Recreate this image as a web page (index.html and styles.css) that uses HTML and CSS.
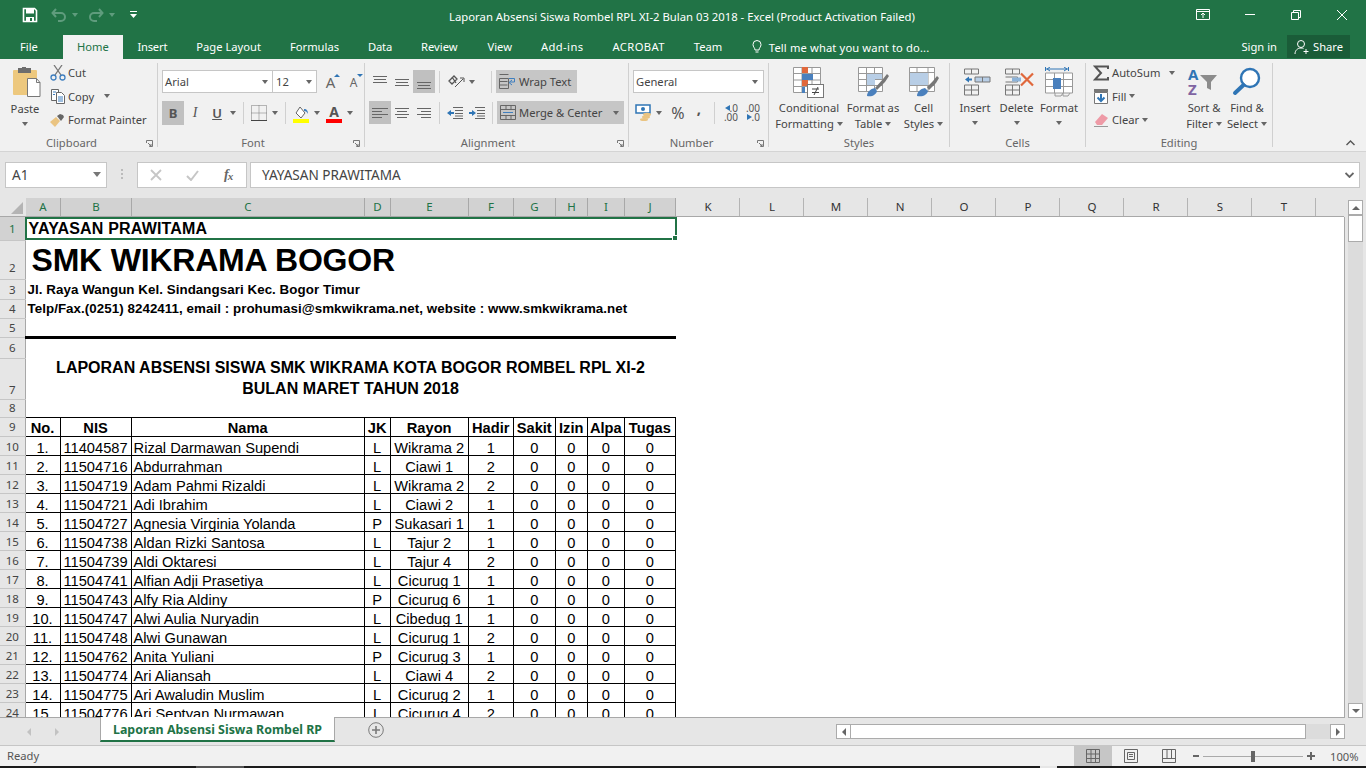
FILE: index.html
```html
<!DOCTYPE html>
<html>
<head>
  <title>Laporan Absensi Siswa Rombel RPL XI-2 Bulan 03 2018 - Excel</title>
  <link rel="stylesheet" href="styles.css">
</head>
<body>
<div class="app">

  <!-- title bar -->
  <header class="titlebar">
    <div class="quick">
      <svg class="save" width="16" height="16" viewBox="0 0 16 16"><path d="M1.5 1.5h11l2 2v11h-13z" fill="none" stroke="#fff" stroke-width="1.6"/><rect x="4" y="2" width="8" height="4.5" fill="#fff"/><rect x="4" y="10" width="8" height="4" fill="#fff"/><rect x="8" y="11" width="2" height="3" fill="#217346"/></svg>
      <svg class="undo" width="16" height="14" viewBox="0 0 16 14"><path d="M5 1L1.5 5 5 9M2 5h8a4 4 0 0 1 0 8H7" fill="none" stroke="#5f9c7d" stroke-width="2"/></svg>
      <span class="caret dim"></span>
      <svg class="redo" width="16" height="14" viewBox="0 0 16 14"><path d="M11 1l3.5 4L11 9M14 5H6a4 4 0 0 0 0 8h3" fill="none" stroke="#5f9c7d" stroke-width="2"/></svg>
      <span class="caret dim"></span>
      <svg class="custom" width="7" height="8" viewBox="0 0 7 8"><rect y="0" width="7" height="1" fill="#fff"/><path d="M0 3h7L3.5 7z" fill="#fff"/></svg>
    </div>
    <div class="doc-title">Laporan Absensi Siswa Rombel RPL XI-2 Bulan 03 2018 - Excel (Product Activation Failed)</div>
    <div class="winbtns">
      <svg width="14" height="11" viewBox="0 0 14 11"><path d="M.5.5h13v10H.5zM.5 2.500h13M7 9V4.500M5 6l2-2 2 2" fill="none" stroke="#fff"/></svg>
      <svg width="10" height="2" viewBox="0 0 10 2"><rect y="0" width="10" height="1" fill="#fff"/></svg>
      <svg width="10" height="10" viewBox="0 0 10 10"><path d="M.5 2.500h7v7h-7zM2.500 2.500v-2h7v7h-2" fill="none" stroke="#fff"/></svg>
      <svg width="10" height="10" viewBox="0 0 10 10"><path d="M0 0l10 10M10 0L0 10" stroke="#fff" fill="none"/></svg>
    </div>
  </header>

  <!-- ribbon tabs -->
  <nav class="tabs">
    <span class="tab file">File</span>
    <span class="tab home">Home</span>
    <span class="tab tight">Insert</span>
    <span class="tab">Page Layout</span>
    <span class="tab">Formulas</span>
    <span class="tab tight">Data</span>
    <span class="tab">Review</span>
    <span class="tab view">View</span>
    <span class="tab loose">Add-ins</span>
    <span class="tab loose">ACROBAT</span>
    <span class="tab">Team</span>
    <span class="tellme">
      <svg width="10" height="14" viewBox="0 0 10 14"><path d="M3 10c0-2-2-3-2-5.500a4 4 0 0 1 8 0C9 7 7 8 7 10zM3.500 12h3" fill="none" stroke="#fff"/></svg>
      Tell me what you want to do...
    </span>
    <span class="signin">Sign in</span>
    <span class="share">
      <svg width="16" height="16" viewBox="0 0 16 16"><circle cx="7" cy="5" r="3.500" fill="none" stroke="#fff"/><path d="M1 15c0-3.500 2.500-6 6-6 1 0 2 .2 2.500.6M12 10v5M9.500 12.500h5" fill="none" stroke="#fff"/></svg>
      Share
    </span>
  </nav>

  <!-- ribbon -->
  <section class="ribbon">

    <div class="group g-clipboard">
      <div class="group-body">
        <div class="big paste">
          <svg width="30" height="31" viewBox="0 0 30 31"><rect x="1" y="3" width="24" height="25" rx="1" fill="#edc87e"/><rect x="6" y="1" width="13" height="5" fill="#6d6d6d"/><rect x="10" y="0" width="4" height="2" fill="#6d6d6d"/><path d="M15.500 11.500h9l3.500 4v14h-12.500z" fill="#fff" stroke="#777"/><path d="M24.500 11.500v4h3.500" fill="none" stroke="#777"/></svg>
          <span class="big-label">Paste</span>
          <span class="caret"></span>
        </div>
        <div class="stack">
          <div class="line">
            <svg width="16" height="16" viewBox="0 0 16 16"><path d="M4 0l7 10M12 0L5 10" stroke="#777" stroke-width="1.300" fill="none"/><circle cx="3.500" cy="12.500" r="2.500" fill="none" stroke="#3f7fbf" stroke-width="1.300"/><circle cx="12.500" cy="12.500" r="2.500" fill="none" stroke="#3f7fbf" stroke-width="1.300"/></svg>
            Cut
          </div>
          <div class="line">
            <svg width="16" height="16" viewBox="0 0 16 16"><path d="M1.500 1.500h7v11h-7z" fill="#fff" stroke="#666"/><path d="M6.500 4.500h5l3 3v8h-8z" fill="#fff" stroke="#666"/><path d="M3 4h3M3 6.500h2M8 9h5M8 11h5M8 13h5" stroke="#3f7fbf"/></svg>
            Copy <span class="caret after-copy"></span>
          </div>
          <div class="line">
            <svg width="16" height="14" viewBox="0 0 16 14"><path d="M0 9l6-5 4 4-5 6z" fill="#eac482"/><path d="M7 3l3-2 3 1 1 2-3 4z" fill="#666"/></svg>
            Format Painter
          </div>
        </div>
      </div>
      <div class="group-label">Clipboard</div>
      <svg class="launcher" width="7" height="7" viewBox="0 0 7 7"><path d="M.5 3V.5H6.500V6.500H3.500M2 3l3 3M5 4v2H3" fill="none" stroke="#777"/></svg>
    </div>

    <div class="group g-font">
      <div class="group-body rows">
        <div class="row">
          <div class="combo font-name">Arial<span class="caret"></span></div>
          <div class="combo font-size">12<span class="caret"></span></div>
          <span class="font-step grow">A<i class="tri up"></i></span>
          <span class="font-step shrink">A<i class="tri down"></i></span>
        </div>
        <div class="row">
          <span class="btn active bold">B</span>
          <span class="btn ital">I</span>
          <span class="btn under">U</span>
          <span class="caret side"></span>
          <span class="sep"></span>
          <svg class="ico" width="16" height="16" viewBox="0 0 16 16"><path d="M.5.5h15v15H.5zM8 .5v15M.5 8h15" fill="none" stroke="#777" stroke-dasharray="1 1"/><path d="M0 15.500h16" stroke="#444"/></svg>
          <span class="caret side"></span>
          <span class="sep"></span>
          <span class="color-ico">
            <svg width="16" height="13" viewBox="0 0 16 13"><path d="M3 7l4-6 5 6-4 5z" fill="#fff" stroke="#666"/><path d="M11 3c3 0 4 2 4 5-1-2-2-3-4-3z" fill="#3f7fbf"/></svg>
            <i class="bar yellow"></i>
          </span>
          <span class="caret side"></span>
          <span class="color-ico text-a">
            <b>A</b>
            <i class="bar red"></i>
          </span>
          <span class="caret side"></span>
        </div>
      </div>
      <div class="group-label">Font</div>
      <svg class="launcher" width="7" height="7" viewBox="0 0 7 7"><path d="M.5 3V.5H6.500V6.500H3.500M2 3l3 3M5 4v2H3" fill="none" stroke="#777"/></svg>
    </div>

    <div class="group g-align">
      <div class="group-body rows">
        <div class="row">
          <span class="btn al"><svg width="14" height="14" viewBox="0 0 14 14"><path d="M0 1.500h14M1 4.500h12M0 7.500h14" stroke="#666" fill="none"/></svg></span>
          <span class="btn al"><svg width="14" height="14" viewBox="0 0 14 14"><path d="M0 4.500h14M1 7.500h12M0 10.500h14" stroke="#666" fill="none"/></svg></span>
          <span class="btn al active"><svg width="14" height="14" viewBox="0 0 14 14"><path d="M0 7.500h14M1 10.500h12M0 13.500h14" stroke="#666" fill="none"/></svg></span>
          <span class="sep"></span>
          <svg class="ico orient" width="17" height="15" viewBox="0 0 17 15"><path d="M1 7l5-5 3 3-5 5zM4 3l4 6" fill="none" stroke="#555" stroke-width="1.300"/><path d="M7 13L15 5M12 4h4v4" fill="none" stroke="#555"/></svg>
          <span class="caret side"></span>
          <span class="sep tall first"></span>
          <span class="wide-btn active wrap">
            <svg width="17" height="15" viewBox="0 0 17 15"><path d="M.5.5h9M.5 4.500h9v10h-9zM.5 7.500h8M.5 11h8" fill="none" stroke="#666"/><path d="M10 4.500h5.500V8H11" fill="none" stroke="#3f7fbf"/><path d="M13 6L10 8.500 13 11" fill="none" stroke="#3f7fbf"/></svg>
            Wrap Text
          </span>
        </div>
        <div class="row">
          <span class="btn al active"><svg width="16" height="14" viewBox="0 0 16 14"><path d="M0 2.500h16M0 5.500h10M0 8.500h16M0 11.500h10" stroke="#666" fill="none"/></svg></span>
          <span class="btn al"><svg width="14" height="14" viewBox="0 0 14 14"><path d="M0 2.500h14M2 5.500h10M0 8.500h14M2 11.500h10" stroke="#666" fill="none"/></svg></span>
          <span class="btn al"><svg width="14" height="14" viewBox="0 0 14 14"><path d="M0 2.500h14M4 5.500h10M0 8.500h14M4 11.500h10" stroke="#666" fill="none"/></svg></span>
          <span class="sep"></span>
          <svg class="ico outdent" width="16" height="12" viewBox="0 0 16 12"><path d="M6 .5h10M8 3.500h8M8 6.500h8M8 9h8M6 11.500h10" stroke="#666" fill="none"/><path d="M0 6l4-3v2h3v2H4v2z" fill="#2f75b5"/></svg>
          <svg class="ico indent" width="16" height="12" viewBox="0 0 16 12"><path d="M6 .5h10M8 3.500h8M8 6.500h8M8 9h8M6 11.500h10" stroke="#666" fill="none"/><path d="M7 6L3 3v2H0v2h3v2z" fill="#2f75b5"/></svg>
          <span class="sep tall"></span>
          <span class="wide-btn active merge">
            <svg width="16" height="15" viewBox="0 0 16 15"><path d="M.5.5h15v14H.5zM.5 4.500h15M.5 10.500h15M6 .5v4M11 .5v4M6 10.500v4M11 10.500v4" fill="none" stroke="#666"/><path d="M3 7.500h10" stroke="#3f7fbf"/></svg>
            Merge &amp; Center
            <span class="caret"></span>
          </span>
        </div>
      </div>
      <div class="group-label">Alignment</div>
      <svg class="launcher" width="7" height="7" viewBox="0 0 7 7"><path d="M.5 3V.5H6.500V6.500H3.500M2 3l3 3M5 4v2H3" fill="none" stroke="#777"/></svg>
    </div>

    <div class="group g-number">
      <div class="group-body rows">
        <div class="row">
          <div class="combo num-format">General<span class="caret"></span></div>
        </div>
        <div class="row">
          <svg class="ico money" width="17" height="17" viewBox="0 0 17 17"><rect x="1" y="1" width="14" height="8" fill="#fff" stroke="#2f75b5" stroke-width="1.500"/><circle cx="8" cy="5" r="2" fill="#2f75b5"/><ellipse cx="12" cy="10.500" rx="4" ry="1.800" fill="#eac482"/><ellipse cx="11" cy="13" rx="4" ry="1.800" fill="#eac482"/><ellipse cx="9" cy="15.500" rx="4" ry="1.500" fill="#eac482"/></svg>
          <span class="caret side"></span>
          <span class="pct">%</span>
          <span class="comma">,</span>
          <span class="sep num-sep"></span>
          <span class="dec"><span class="dec-top"><i class="tri-left"></i>.0</span><span>.00</span></span>
          <span class="dec"><span>.00</span><span class="dec-top"><i class="tri-right"></i>.0</span></span>
        </div>
      </div>
      <div class="group-label">Number</div>
      <svg class="launcher" width="7" height="7" viewBox="0 0 7 7"><path d="M.5 3V.5H6.500V6.500H3.500M2 3l3 3M5 4v2H3" fill="none" stroke="#777"/></svg>
    </div>

    <div class="group g-styles">
      <div class="group-body bigs">
        <div class="big cond">
          <svg width="32" height="31" viewBox="0 0 32 31"><path d="M.5.500h27v25H.5zM.5 6.500h27M.5 13h27M.5 19.500h27M9 .5v25M19 .5v25" fill="#fff" stroke="#999"/><rect x="9" y="0" width="6" height="6" fill="#e0683c"/><rect x="9" y="7" width="11" height="6" fill="#4a80bd"/><rect x="9" y="13" width="6" height="6" fill="#e0683c"/><rect x="9" y="20" width="3" height="6" fill="#4a80bd"/><rect x="14.500" y="17.500" width="16" height="13" fill="#fff" stroke="#777"/><path d="M19 22h7M19 25.500h7M25 20l-4 8" stroke="#444" fill="none"/></svg>
          <span class="big-label">Conditional<br>Formatting<span class="caret"></span></span>
        </div>
        <div class="big fmt-table">
          <svg width="31" height="31" viewBox="0 0 31 31"><path d="M.5.500h24v24H.5zM.5 6.500h24M.5 12.500h24M.5 18.500h24M8.500.5v24M16.500.5v24" fill="#fff" stroke="#999"/><path d="M9 7h15v5H17v6H9z" fill="#b8cee6"/><path d="M17 21l8-9 4-5 2 2-4 6-8 8z" fill="#777"/><path d="M9 29c0-4 3-7 8-8l2 3c-1 4-5 6-10 5z" fill="#4a80bd"/></svg>
          <span class="big-label">Format as<br>Table<span class="caret"></span></span>
        </div>
        <div class="big cell-styles">
          <svg width="30" height="31" viewBox="0 0 30 31"><path d="M.5.500h25v24H.5zM.5 5.500h25M.5 18.500h25M8 .5v24M19 .5v24" fill="#fff" stroke="#999"/><rect x="1" y="6" width="18" height="12" fill="#b8cee6"/><path d="M18 20l6-6 4-5 2 2-3 5-7 7z" fill="#777"/><path d="M8 29c0-4 3-7 8-8l3 3c-1 4-5 6-11 5z" fill="#4a80bd"/></svg>
          <span class="big-label">Cell<br>Styles<span class="caret"></span></span>
        </div>
      </div>
      <div class="group-label">Styles</div>
    </div>

    <div class="group g-cells">
      <div class="group-body bigs">
        <div class="big ins">
          <svg width="28" height="28" viewBox="0 0 28 28"><path d="M.5.500h14v5H.5zM7.500.5v5M.5 16.500h14v10H.5zM.5 21.500h14M7.500 16.500v10" fill="none" stroke="#777"/><path d="M11 8.500h15v5H11zM18.500 8.500v5" fill="#b8cee6" stroke="#777"/><path d="M1 11l4-3v2h3v2H5v2z" fill="#2f75b5"/></svg>
          <span class="big-label">Insert</span>
          <span class="caret"></span>
        </div>
        <div class="big del">
          <svg width="30" height="28" viewBox="0 0 30 28"><path d="M.5.500h14v5H.5zM7.500.5v5M.5 16.500h14v10H.5zM.5 21.500h14M7.500 16.500v10M.5 8.500h12v5H.5" fill="none" stroke="#777"/><rect x="7" y="9" width="9" height="4" fill="#8db3d9"/><path d="M16 5l12 12M28 5L16 17" stroke="#e0683c" stroke-width="2.200" fill="none"/></svg>
          <span class="big-label">Delete</span>
          <span class="caret"></span>
        </div>
        <div class="big fmt">
          <svg width="29" height="31" viewBox="0 0 29 31"><path d="M.5 0v4M23.500 0v4" stroke="#2f75b5" fill="none"/><path d="M1 2h22M5 0L2 2l3 2M19 0l3 2-3 2" stroke="#2f75b5" fill="none"/><path d="M.5 6h27v20H.5zM9.500 6v20M18.500 6v20M.5 12.500h27M.5 19.500h27" fill="#fff" stroke="#999"/><rect x="8" y="11" width="8" height="11" fill="#4a80bd"/><path d="M10 26v3h6l2-3M18 26v3h5l2-3" fill="none" stroke="#999"/></svg>
          <span class="big-label">Format</span>
          <span class="caret"></span>
        </div>
      </div>
      <div class="group-label">Cells</div>
    </div>

    <div class="group g-editing">
      <div class="group-body edit-body">
        <div class="stack">
          <div class="line"><svg width="16" height="16" viewBox="0 0 16 16"><path d="M15 4V1.500H2L8 8l-6 6.500h13V12" fill="none" stroke="#555" stroke-width="2"/></svg><span class="auto-label">AutoSum</span><span class="caret"></span></div>
          <div class="line"><svg width="14" height="15" viewBox="0 0 14 15"><path d="M.5 3.500h13v11H.5z" fill="#fff" stroke="#777"/><rect x="0" y="0" width="14" height="3" fill="#777"/><path d="M7 5v7M3.500 8.500L7 12l3.500-3.500" fill="none" stroke="#2f75b5" stroke-width="2"/></svg><span>Fill</span><span class="caret"></span></div>
          <div class="line"><svg width="14" height="14" viewBox="0 0 14 14"><path d="M1 9l7-8 6 4-6 7H3z" fill="#ee9aa6"/><path d="M0 13.500h14" stroke="#999"/></svg><span>Clear</span><span class="caret"></span></div>
        </div>
        <div class="big sort">
          <span class="sort-ico"><b class="az a">A</b><b class="az z">Z</b><svg width="18" height="15" viewBox="0 0 18 15"><path d="M0 0h17l-6 7v8l-4-2V7z" fill="#8c8c8c"/></svg></span>
          <span class="big-label">Sort &amp;<br>Filter<span class="caret"></span></span>
        </div>
        <div class="big find">
          <svg width="30" height="29" viewBox="0 0 30 29"><circle cx="18" cy="11" r="9" fill="#fff" stroke="#2f75b5" stroke-width="2.400"/><path d="M11.500 18L3 26" stroke="#2f75b5" stroke-width="4" stroke-linecap="round"/></svg>
          <span class="big-label">Find &amp;<br>Select<span class="caret"></span></span>
        </div>
      </div>
      <div class="group-label">Editing</div>
    </div>

    <svg class="collapse" width="9" height="6" viewBox="0 0 9 6"><path d="M.5 5l4-4 4 4" fill="none" stroke="#555" stroke-width="1.400"/></svg>
  </section>

  <!-- formula bar -->
  <section class="formula-bar">
    <div class="name-box">A1<span class="caret big-caret"></span></div>
    <div class="dots"><i></i><i></i><i></i></div>
    <div class="fx-box">
      <svg width="12" height="12" viewBox="0 0 12 12"><path d="M1 1l10 10M11 1L1 11" stroke="#c6c6c6" stroke-width="1.800" fill="none"/></svg>
      <svg width="13" height="11" viewBox="0 0 13 11"><path d="M1 6l4 4 7-9" stroke="#c6c6c6" stroke-width="2" fill="none"/></svg>
      <span class="fx">f<span class="fx-x">x</span></span>
    </div>
    <div class="formula-input">YAYASAN PRAWITAMA
      <svg class="fb-expand" width="9" height="6" viewBox="0 0 9 6"><path d="M.5 1l4 4 4-4" fill="none" stroke="#666" stroke-width="1.800"/></svg>
    </div>
  </section>

  <!-- column letters -->
  <div class="col-heads">
    <div class="corner"><i></i></div>
    <span class="ch on w-a">A</span>
    <span class="ch on w-b">B</span>
    <span class="ch on w-c">C</span>
    <span class="ch on w-d">D</span>
    <span class="ch on w-e">E</span>
    <span class="ch on w-f">F</span>
    <span class="ch on w-g">G</span>
    <span class="ch on w-h">H</span>
    <span class="ch on w-i">I</span>
    <span class="ch on w-j">J</span>
    <span class="ch">K</span>
    <span class="ch">L</span>
    <span class="ch">M</span>
    <span class="ch">N</span>
    <span class="ch">O</span>
    <span class="ch">P</span>
    <span class="ch">Q</span>
    <span class="ch">R</span>
    <span class="ch">S</span>
    <span class="ch">T</span>
    <span class="ch-rest"></span>
  </div>

  <!-- sheet -->
  <div class="sheet-wrap">
    <div class="sheet">
      <table class="grid">
        <colgroup>
          <col class="c-rh"><col class="c-a"><col class="c-b"><col class="c-c"><col class="c-d"><col class="c-e"><col class="c-f"><col class="c-g"><col class="c-h"><col class="c-i"><col class="c-j">
        </colgroup>
        <tr class="r1"><th class="on">1</th><td colspan="10" class="t-yayasan">YAYASAN PRAWITAMA</td></tr>
        <tr class="r2"><th>2</th><td colspan="10" class="t-smk">SMK WIKRAMA BOGOR</td></tr>
        <tr class="r3"><th>3</th><td colspan="10" class="t-addr">Jl. Raya Wangun Kel. Sindangsari Kec. Bogor Timur</td></tr>
        <tr class="r4"><th>4</th><td colspan="10" class="t-addr">Telp/Fax.(0251) 8242411, email : prohumasi@smkwikrama.net, website : www.smkwikrama.net</td></tr>
        <tr class="r5"><th>5</th><td colspan="10" class="t-rule"></td></tr>
        <tr class="r6"><th>6</th><td colspan="10"></td></tr>
        <tr class="r7"><th>7</th><td colspan="10" class="t-title"><div class="title-lines">LAPORAN ABSENSI SISWA SMK WIKRAMA KOTA BOGOR ROMBEL RPL XI-2<br>BULAN MARET TAHUN 2018</div></td></tr>
        <tr class="r8"><th>8</th><td colspan="10"></td></tr>
        <tr class="r9 data head"><th>9</th><td>No.</td><td>NIS</td><td>Nama</td><td>JK</td><td>Rayon</td><td>Hadir</td><td>Sakit</td><td>Izin</td><td>Alpa</td><td>Tugas</td></tr>
        <tr class="data"><th>10</th><td>1.</td><td>11404587</td><td class="nm">Rizal Darmawan Supendi</td><td>L</td><td>Wikrama 2</td><td>1</td><td>0</td><td>0</td><td>0</td><td>0</td></tr>
        <tr class="data"><th>11</th><td>2.</td><td>11504716</td><td class="nm">Abdurrahman</td><td>L</td><td>Ciawi 1</td><td>2</td><td>0</td><td>0</td><td>0</td><td>0</td></tr>
        <tr class="data"><th>12</th><td>3.</td><td>11504719</td><td class="nm">Adam Pahmi Rizaldi</td><td>L</td><td>Wikrama 2</td><td>2</td><td>0</td><td>0</td><td>0</td><td>0</td></tr>
        <tr class="data"><th>13</th><td>4.</td><td>11504721</td><td class="nm">Adi Ibrahim</td><td>L</td><td>Ciawi 2</td><td>1</td><td>0</td><td>0</td><td>0</td><td>0</td></tr>
        <tr class="data"><th>14</th><td>5.</td><td>11504727</td><td class="nm">Agnesia Virginia Yolanda</td><td>P</td><td>Sukasari 1</td><td>1</td><td>0</td><td>0</td><td>0</td><td>0</td></tr>
        <tr class="data"><th>15</th><td>6.</td><td>11504738</td><td class="nm">Aldan Rizki Santosa</td><td>L</td><td>Tajur 2</td><td>1</td><td>0</td><td>0</td><td>0</td><td>0</td></tr>
        <tr class="data"><th>16</th><td>7.</td><td>11504739</td><td class="nm">Aldi Oktaresi</td><td>L</td><td>Tajur 4</td><td>2</td><td>0</td><td>0</td><td>0</td><td>0</td></tr>
        <tr class="data"><th>17</th><td>8.</td><td>11504741</td><td class="nm">Alfian Adji Prasetiya</td><td>L</td><td>Cicurug 1</td><td>1</td><td>0</td><td>0</td><td>0</td><td>0</td></tr>
        <tr class="data"><th>18</th><td>9.</td><td>11504743</td><td class="nm">Alfy Ria Aldiny</td><td>P</td><td>Cicurug 6</td><td>1</td><td>0</td><td>0</td><td>0</td><td>0</td></tr>
        <tr class="data"><th>19</th><td>10.</td><td>11504747</td><td class="nm">Alwi Aulia Nuryadin</td><td>L</td><td>Cibedug 1</td><td>1</td><td>0</td><td>0</td><td>0</td><td>0</td></tr>
        <tr class="data"><th>20</th><td>11.</td><td>11504748</td><td class="nm">Alwi Gunawan</td><td>L</td><td>Cicurug 1</td><td>2</td><td>0</td><td>0</td><td>0</td><td>0</td></tr>
        <tr class="data"><th>21</th><td>12.</td><td>11504762</td><td class="nm">Anita Yuliani</td><td>P</td><td>Cicurug 3</td><td>1</td><td>0</td><td>0</td><td>0</td><td>0</td></tr>
        <tr class="data"><th>22</th><td>13.</td><td>11504774</td><td class="nm">Ari Aliansah</td><td>L</td><td>Ciawi 4</td><td>2</td><td>0</td><td>0</td><td>0</td><td>0</td></tr>
        <tr class="data"><th>23</th><td>14.</td><td>11504775</td><td class="nm">Ari Awaludin Muslim</td><td>L</td><td>Cicurug 2</td><td>1</td><td>0</td><td>0</td><td>0</td><td>0</td></tr>
        <tr class="data"><th>24</th><td>15.</td><td>11504776</td><td class="nm">Ari Septyan Nurmawan</td><td>L</td><td>Cicurug 4</td><td>2</td><td>0</td><td>0</td><td>0</td><td>0</td></tr>
      </table>
      <div class="selection"><i class="handle"></i></div>
    </div>
    <div class="vscroll">
      <span class="sb-btn"><i class="arrow-up"></i></span>
      <span class="sb-thumb"></span>
      <span class="sb-track"></span>
      <span class="sb-btn"><i class="arrow-down"></i></span>
    </div>
  </div>

  <!-- sheet tabs -->
  <div class="tabbar">
    <div class="tab-nav"><i class="nav-l"></i><i class="nav-r"></i></div>
    <div class="sheet-tab">Laporan Absensi Siswa Rombel RP</div>
    <div class="add-sheet"><svg width="16" height="16" viewBox="0 0 16 16"><circle cx="8" cy="8" r="7.300" fill="none" stroke="#7a7a7a"/><path d="M4 8h8M8 4v8" stroke="#7a7a7a" stroke-width="1.600"/></svg></div>
    <div class="hscroll">
      <span class="sb-btn"><i class="arrow-left"></i></span>
      <span class="hs-thumb"></span>
      <span class="hs-track"></span>
      <span class="sb-btn"><i class="arrow-right"></i></span>
    </div>
  </div>

  <!-- status bar -->
  <footer class="status">
    <span class="ready">Ready</span>
    <span class="view-btn on"><svg width="14" height="14" viewBox="0 0 14 14"><path d="M.5.500h13v13H.5zM.5 5h13M.5 9.500h13M5 .5v13M9.500.5v13" fill="none" stroke="#666"/></svg></span>
    <span class="view-btn"><svg width="14" height="14" viewBox="0 0 14 14"><path d="M.5.500h13v13H.5zM3.500 3.500h7v7h-7zM5 5.500h4M5 7.500h4" fill="none" stroke="#666"/></svg></span>
    <span class="view-btn"><svg width="14" height="14" viewBox="0 0 14 14"><path d="M.5.500h13v13H.5zM.5 9.500h13M5 .5v9M9.500.5v9" fill="none" stroke="#666" /></svg></span>
    <span class="zoom-minus"></span>
    <span class="slider"><i></i></span>
    <span class="zoom-plus"></span>
    <span class="zoom-val">100%</span>
  </footer>

  <div class="taskbar"><i class="tb-a"></i><i class="tb-b"></i><i class="tb-c"></i><i class="tb-d"></i><i class="tb-e"></i></div>
</div>
</body>
</html>
```

FILE: styles.css
```css
/* excel window, fixed to the 1366x768 capture */
html, body {
  margin: 0;
  padding: 0;
}

body {
  font-family: "Noto Sans", "Liberation Sans", sans-serif;
  font-size: 11.2px;
  color: #444;
}

i { display: block; font-style: normal; }

.app {
  width: 1366px;
  height: 768px;
  display: flex;
  flex-direction: column;
  overflow: hidden;
  background: #e6e6e6;
}

/* title bar */
.titlebar {
  height: 35px;
  flex: none;
  display: flex;
  align-items: center;
  background: #217346;
  color: #fff;
  position: relative;
}

.quick {
  display: flex;
  align-items: center;
  padding-left: 22px;
  width: 300px;
  margin-top: -6px;
}

.save { margin-right: 13px; }
.undo { margin-right: 5px; }
.redo { margin-left: 10px; margin-right: 5px; }
.custom { margin-left: 15px; }

.doc-title {
  position: absolute;
  left: 0;
  right: 0;
  top: 8px;
  text-align: center;
  font-size: 11.3px;
  line-height: 18px;
  margin-left: -2px;
}

.winbtns {
  margin-left: auto;
  display: flex;
  align-items: center;
  margin-top: -6px;
  width: 170px;
}

.winbtns svg:nth-child(1) { margin-right: 35px; }
.winbtns svg:nth-child(2) { margin-right: 36px; }
.winbtns svg:nth-child(3) { margin-right: 36px; }

.caret {
  display: inline-block;
  width: 0;
  height: 0;
  border-left: 3.5px solid transparent;
  border-right: 3.5px solid transparent;
  border-top: 4px solid #666;
}

.caret.dim { border-top-color: #5f9c7d; }

/* tabs */
.tabs {
  height: 24px;
  flex: none;
  display: flex;
  align-items: stretch;
  background: #217346;
  color: #fff;
  line-height: 23px;
}

.tab { padding: 0 14.5px; }
.tab.file { padding: 0 25px 0 20px; }
.tab.tight { letter-spacing: -.2px; }
.tab.loose { letter-spacing: .4px; }
.tab.view { padding-left: 15.5px; }

.tab.home {
  width: 60px;
  box-sizing: border-box;
  padding: 0;
  text-align: center;
  background: #f1f1f1;
  color: #217346;
}

.tellme {
  display: flex;
  align-items: center;
  gap: 7px;
  margin-left: 15px;
  letter-spacing: .13px;
}

.signin {
  margin-left: auto;
  margin-right: 10px;
}

.share {
  display: flex;
  align-items: center;
  gap: 3px;
  width: 63px;
  height: 23px;
  box-sizing: border-box;
  padding-left: 7px;
  margin-right: 16px;
  background: #1a5c38;
}

/* ribbon */
.ribbon {
  height: 93px;
  flex: none;
  box-sizing: border-box;
  display: flex;
  padding-top: 4px;
  background: #f1f1f1;
  border-bottom: 1px solid #d4d4d4;
  position: relative;
}

.group {
  height: 84px;
  box-sizing: border-box;
  border-right: 1px solid #d0d0d0;
  display: flex;
  flex-direction: column;
  position: relative;
}

.g-clipboard { width: 158px; }
.g-font { width: 207px; padding-left: 4px; }
.g-align { width: 264px; padding-left: 4px; }
.g-number { width: 140px; padding-left: 4px; }
.g-styles { width: 181px; padding-left: 4px; }
.g-cells { width: 136px; padding-left: 5px; }
.g-editing { width: 187px; padding-left: 7px; }

.group-body {
  height: 64px;
  flex: none;
}

.group-label {
  height: 20px;
  line-height: 20px;
  padding-top: 6px;
  box-sizing: border-box;
  text-align: center;
  color: #666;
}

.g-clipboard .group-label { padding-right: 14px; }
.g-font .group-label { margin-left: -4px; padding-right: 16px; }
.g-align .group-label { margin-left: -4px; padding-right: 17px; }
.g-number .group-label { margin-left: -4px; padding-right: 14px; }
.g-styles .group-label { margin-left: -4px; }
.g-cells .group-label { margin-left: -5px; }
.g-editing .group-label { margin-left: -7px; }

.launcher {
  position: absolute;
  right: 4px;
  bottom: 0;
}

.rows {
  display: flex;
  flex-direction: column;
  gap: 8px;
  padding-top: 7px;
  box-sizing: border-box;
}

.row {
  display: flex;
  align-items: center;
  height: 23px;
}

.big {
  display: flex;
  flex-direction: column;
  align-items: center;
  flex: none;
}

.big-label {
  text-align: center;
  line-height: 16px;
  display: block;
  white-space: nowrap;
}

.big-label .caret { margin-left: 3px; vertical-align: 2px; }
.big > .caret { margin-top: 5px; }

.stack { display: flex; flex-direction: column; margin-top: -2px; }

.line {
  display: flex;
  align-items: center;
  height: 23.5px;
  flex: none;
  gap: 2px;
  white-space: nowrap;
}

/* clipboard */
.g-clipboard .group-body { display: flex; }

.paste { width: 50px; padding-top: 4px; }
.paste svg { margin-left: 3px; margin-bottom: 3px; flex: none; }
.after-copy { margin-left: 8px; }

/* font */
.combo {
  height: 23px;
  box-sizing: border-box;
  background: #fff;
  border: 1px solid #c6c6c6;
  line-height: 21px;
  padding-left: 2px;
  position: relative;
  flex: none;
}

.combo .caret {
  position: absolute;
  right: 4px;
  top: 9px;
}

.font-name { width: 111px; }
.font-size { width: 44px; border-left: 0; padding-left: 3px; }

.font-step {
  position: relative;
  width: 15px;
  text-align: center;
  color: #666;
  flex: none;
}

.font-step.grow { font-size: 15px; margin-left: 6px; }
.font-step.shrink { font-size: 12px; margin-left: 8px; padding-top: 2px; }

.tri {
  position: absolute;
  right: -2px;
  top: 2px;
  width: 0;
  height: 0;
  border-left: 3px solid transparent;
  border-right: 3px solid transparent;
}

.tri.up { border-bottom: 3px solid #2f75b5; }
.tri.down { border-top: 3px solid #2f75b5; }

.btn {
  width: 22px;
  height: 24px;
  display: flex;
  align-items: center;
  justify-content: center;
  flex: none;
  color: #555;
  font-size: 13px;
}

.btn.active { background: #c0c0c0; }
.btn.bold { font-weight: bold; }

.btn.ital {
  font-family: "Liberation Serif", serif;
  font-style: italic;
  font-size: 14px;
}

.btn.under { text-decoration: underline; font-weight: 600; }

.caret.side { margin-left: 5px; flex: none; }
.btn.under + .caret.side { margin-left: 2px; }

.sep {
  width: 1px;
  height: 22px;
  background: #d0d0d0;
  margin: 0 7px;
  flex: none;
}

.ico { flex: none; }

.color-ico {
  width: 16px;
  height: 20px;
  display: flex;
  flex-direction: column;
  justify-content: flex-end;
  align-items: center;
  flex: none;
}

.color-ico b { font-size: 14px; line-height: 14px; color: #555; }

.color-ico .bar {
  width: 16px;
  height: 4px;
  flex: none;
}

.bar.yellow { background: #ffff00; }
.bar.red { background: #ff0000; }

.text-a { margin-left: 6px; }

/* alignment */
.btn.al { height: 23px; }
.g-align .sep { margin: 0 0 0 4px; }
.g-align .sep.tall { margin: 0 4px 0 7px; }
.g-align .sep.tall.first { margin-left: 16px; }
.orient { margin-left: 8px; }
.g-align .caret.side { margin-left: 4px; }
.outdent { margin-left: 7px; }
.indent { margin-left: 6px; }

.wide-btn {
  height: 23px;
  display: flex;
  align-items: center;
  gap: 3px;
  padding-left: 3px;
  box-sizing: border-box;
  background: #c6c6c6;
  flex: none;
  white-space: nowrap;
}

.wrap { width: 81px; }
.merge { width: 127px; }
.merge .caret { margin-left: 8px; }

/* number */
.num-format { width: 131px; }
.num-format .caret { top: 9px; right: 5px; }

.money { margin-left: 2px; }
.g-number .caret.side { margin-left: 4px; }

.pct {
  width: 14px;
  text-align: center;
  font-size: 16px;
  color: #555;
  margin-left: 9px;
  line-height: 20px;
  flex: none;
}

.comma {
  width: 6px;
  text-align: center;
  font-weight: bold;
  font-size: 15px;
  color: #555;
  margin: -6px 0 0 11px;
  line-height: 6px;
  height: 10px;
  flex: none;
}

.g-number .num-sep { margin: 0 0 0 12px; }

.dec {
  display: flex;
  flex-direction: column;
  width: 16px;
  font-size: 10px;
  line-height: 9px;
  text-align: right;
  color: #555;
  flex: none;
  margin-left: 6px;
}

.g-number .num-sep + .dec { margin-left: 7px; }

.dec-top { display: flex; justify-content: flex-end; align-items: center; }

.tri-left, .tri-right {
  width: 0;
  height: 0;
  border-top: 3px solid transparent;
  border-bottom: 3px solid transparent;
}

.tri-left { border-right: 5px solid #2f75b5; }
.tri-right { border-left: 5px solid #2f75b5; }

/* styles, cells, editing */
.bigs { display: flex; padding-top: 4px; box-sizing: border-box; }

.bigs .big svg { height: 31px; margin-bottom: 2px; flex: none; }

.cond { width: 72px; }
.fmt-table { width: 56px; }
.cell-styles { width: 45px; }

.ins { width: 40px; }
.ins svg { margin-left: 5px; }
.del { width: 43px; }
.del svg { margin-left: 6px; }
.fmt { width: 42px; }

.edit-body { display: flex; }
.edit-body .stack { width: 92px; }
.edit-body .line { gap: 3px; }
.auto-label { margin-right: 6px; }
.edit-body .line svg { flex: none; width: 16px; }

.sort { width: 38px; padding-top: 4px; }
.find { width: 48px; padding-top: 4px; }
.find svg { margin-bottom: 4px; flex: none; }

.sort-ico {
  display: flex;
  width: 32px;
  height: 32px;
  flex: none;
  position: relative;
  margin-bottom: 1px;
}

.sort-ico svg { position: absolute; right: 2px; top: 8px; }

.az {
  position: absolute;
  left: 0;
  font-size: 15px;
  line-height: 14px;
}

.az.a { top: 0; color: #2f75b5; }
.az.z { top: 15px; color: #8064a2; }

.collapse {
  position: absolute;
  right: 11px;
  bottom: 5px;
}

/* formula bar */
.formula-bar {
  height: 46px;
  flex: none;
  box-sizing: border-box;
  display: flex;
  align-items: flex-start;
  padding: 10px 6px 0 5px;
  background: #e6e6e6;
  font-size: 13.6px;
}

.name-box, .fx-box, .formula-input {
  height: 26px;
  box-sizing: border-box;
  background: #fff;
  border: 1px solid #c6c6c6;
  line-height: 24px;
  position: relative;
}

.name-box {
  width: 102px;
  padding-left: 6px;
  flex: none;
}

.big-caret {
  position: absolute;
  right: 5px;
  top: 9px;
  border-left-width: 4px;
  border-right-width: 4px;
  border-top-width: 5px;
  border-top-color: #777;
}

.dots {
  width: 30px;
  display: flex;
  flex-direction: column;
  align-items: center;
  gap: 2px;
  padding-top: 7px;
  flex: none;
}

.dots i { width: 2px; height: 2px; background: #bbb; }

.fx-box {
  width: 110px;
  display: flex;
  align-items: center;
  padding-left: 12px;
  gap: 24px;
  flex: none;
  margin-right: 3px;
}

.fx {
  font-family: "Liberation Serif", serif;
  font-style: italic;
  font-weight: bold;
  color: #666;
  font-size: 14px;
  margin-left: 1px;
}

.fx-x { font-size: 11px; position: relative; top: 1px; margin-left: -1px; }

.formula-input {
  flex: 1;
  padding-left: 11px;
}

.fb-expand {
  position: absolute;
  right: 5px;
  top: 9px;
}

/* column letters */
.col-heads {
  height: 19px;
  flex: none;
  box-sizing: border-box;
  display: flex;
  background: #e6e6e6;
  border-bottom: 1px solid #a8a8a8;
  width: 1344px;
  color: #333;
  font-size: 11.5px;
}

.corner {
  width: 26px;
  flex: none;
  position: relative;
}

.corner i {
  position: absolute;
  right: 3px;
  bottom: 2px;
  width: 0;
  height: 0;
  border-left: 12px solid transparent;
  border-bottom: 12px solid #b4b4b4;
}

.ch {
  width: 64px;
  box-sizing: border-box;
  border-right: 1px solid #b4b4b4;
  text-align: center;
  line-height: 18px;
  padding-left: 1px;
  flex: none;
}

.ch.on {
  background: #d2d2d2;
  color: #217346;
  border-right-color: #a8a8a8;
  padding-left: 0;
}

.ch-rest { flex: 1; }

.w-a { width: 35px; }
.w-b { width: 71px; }
.w-c { width: 233px; }
.w-d { width: 26px; }
.w-e { width: 78px; }
.w-f { width: 45px; }
.w-g { width: 42px; }
.w-h { width: 32px; }
.w-i { width: 37px; }
.w-j { width: 51px; }

/* sheet */
.sheet-wrap {
  height: 501px;
  flex: none;
  display: flex;
}

.sheet {
  width: 1345px;
  flex: none;
  box-sizing: border-box;
  background: #fff;
  border-right: 1px solid #a8a8a8;
  border-bottom: 1px solid #a8a8a8;
  overflow: hidden;
  position: relative;
}

.grid {
  border-collapse: collapse;
  table-layout: fixed;
  width: 676px;
  font-family: "Liberation Sans", Arial, sans-serif;
  font-size: 14.667px;
  color: #000;
}

.c-rh { width: 25px; }
.c-a { width: 35px; }
.c-b { width: 71px; }
.c-c { width: 233px; }
.c-d { width: 26px; }
.c-e { width: 78px; }
.c-f { width: 45px; }
.c-g { width: 42px; }
.c-h { width: 32px; }
.c-i { width: 37px; }
.c-j { width: 51px; }

/* row numbers hang near the bottom of the row, so padding sets their place */
.grid th {
  background: #e6e6e6;
  border-right: 1px solid #a8a8a8;
  border-bottom: 1px solid #c6c6c6;
  font-family: "Noto Sans", sans-serif;
  font-weight: normal;
  font-size: 11.5px;
  color: #444;
  line-height: 14px;
  padding: 0 0 2px;
  vertical-align: bottom;
  text-align: center;
}

.r1 th, .r2 th { padding-bottom: 4px; }
.r6 th { padding-bottom: 3px; }
.data th { padding-bottom: 1px; }
.head th { padding-bottom: 2px; }

.grid th.on {
  background: #d2d2d2;
  color: #217346;
}

.grid td {
  padding: 0;
  vertical-align: bottom;
  line-height: 17px;
  white-space: nowrap;
}

.r1 { height: 23px; }
.r2 { height: 39px; }
.r3 { height: 20px; }
.r4 { height: 19px; }
.r5 { height: 19px; }
.r6 { height: 21px; }
.r7 { height: 41px; }
.r8 { height: 18px; }
.r9 { height: 20px; }
.data { height: 19px; }

.grid td.t-yayasan {
  font-weight: bold;
  font-size: 16px;
  letter-spacing: .18px;
  padding: 0 0 1px 3px;
  line-height: 20px;
}

.grid td.t-smk {
  font-weight: bold;
  font-size: 32px;
  letter-spacing: -.2px;
  padding: 0 0 1px 6px;
  line-height: 36px;
}

.grid td.t-addr {
  font-weight: bold;
  font-size: 13.333px;
  letter-spacing: .06px;
  padding: 0 0 1px 2px;
}

.t-rule { border-bottom: 3px solid #000; }

.grid td.t-title {
  font-weight: bold;
  font-size: 16px;
  text-align: center;
  line-height: 21px;
}

.title-lines { margin-top: -1px; }

.data td {
  border: 1px solid #000;
  text-align: center;
}

/* values sit lower in the row than the bold header */
.grid .data td { line-height: 13px; }
.grid .head td { line-height: 15px; font-weight: bold; }

.data td.nm {
  text-align: left;
  padding-left: 2px;
}

/* active cell outline */
.selection {
  position: absolute;
  left: 25px;
  top: 0;
  width: 652px;
  height: 23px;
  box-sizing: border-box;
  border: 2px solid #217346;
}

.handle {
  position: absolute;
  right: -3px;
  bottom: -3px;
  width: 6px;
  height: 6px;
  background: #217346;
  border: 1px solid #fff;
  box-sizing: border-box;
}

/* scrollbars */
.vscroll {
  flex: 1;
  display: flex;
  flex-direction: column;
  padding-left: 3px;
  padding-right: 3px;
  margin-top: -17px;
}

.sb-btn {
  width: 15px;
  height: 15px;
  flex: none;
  box-sizing: border-box;
  background: #fff;
  border: 1px solid #ababab;
  display: flex;
  align-items: center;
  justify-content: center;
}

.arrow-up, .arrow-down, .arrow-left, .arrow-right {
  width: 0;
  height: 0;
}

.arrow-up { border: 4px solid transparent; border-top: 0; border-bottom: 4px solid #666; }
.arrow-down { border: 4px solid transparent; border-bottom: 0; border-top: 4px solid #666; }
.arrow-left { border: 4px solid transparent; border-left: 0; border-right: 4px solid #666; }
.arrow-right { border: 4px solid transparent; border-right: 0; border-left: 4px solid #666; }

.sb-thumb {
  height: 27px;
  flex: none;
  box-sizing: border-box;
  background: #fff;
  border: 1px solid #ababab;
}

.sb-track {
  flex: 1;
  background: #dcdcdc;
}

/* sheet tabs */
.tabbar {
  height: 27px;
  flex: none;
  display: flex;
  background: #e6e6e6;
  box-sizing: border-box;
  position: relative;
}

.tab-nav {
  width: 100px;
  flex: none;
  display: flex;
  align-items: center;
  padding-left: 27px;
  box-sizing: border-box;
  gap: 24px;
}

.nav-l { border: 4px solid transparent; border-left: 0; border-right: 4px solid #c2c2c2; }
.nav-r { border: 4px solid transparent; border-right: 0; border-left: 4px solid #c2c2c2; }

.sheet-tab {
  width: 235px;
  height: 25px;
  flex: none;
  box-sizing: border-box;
  background: #fff;
  border-left: 1px solid #a8a8a8;
  border-right: 1px solid #a8a8a8;
  border-bottom: 2px solid #217346;
  margin-top: -1px;
  text-align: center;
  line-height: 26px;
  color: #217346;
  font-weight: bold;
  font-size: 12.4px;
  white-space: nowrap;
}

.add-sheet {
  width: 82px;
  flex: none;
  display: flex;
  align-items: center;
  justify-content: center;
  height: 24px;
}

.hscroll {
  position: absolute;
  left: 836px;
  top: 6px;
  width: 509px;
  display: flex;
}

.hs-thumb {
  width: 455px;
  height: 15px;
  flex: none;
  box-sizing: border-box;
  background: #fff;
  border: 1px solid #ababab;
  border-left: 0;
}

.hs-track {
  flex: 1;
  background: #dcdcdc;
}

/* status bar */
.status {
  height: 21px;
  flex: none;
  box-sizing: border-box;
  display: flex;
  align-items: center;
  background: #f1f1f1;
  border-top: 1px solid #c6c6c6;
  color: #555;
}

.ready { padding-left: 7px; width: 1074px; flex: none; box-sizing: border-box; margin-top: -1px; }

.view-btn {
  width: 38px;
  height: 20px;
  display: flex;
  align-items: center;
  justify-content: center;
  flex: none;
}

.view-btn.on { background: #c6c6c6; }

.zoom-minus {
  width: 6px;
  height: 2px;
  background: #666;
  margin-left: 5px;
  flex: none;
}

.slider {
  width: 100px;
  height: 1px;
  background: #aaa;
  margin-left: 4px;
  position: relative;
  flex: none;
}

.slider i {
  position: absolute;
  left: 48px;
  top: -5px;
  width: 4px;
  height: 11px;
  background: #666;
}

.zoom-plus {
  width: 8px;
  height: 8px;
  margin-left: 4px;
  flex: none;
  background:
    linear-gradient(#666, #666) center / 8px 2px no-repeat,
    linear-gradient(#666, #666) center / 2px 8px no-repeat;
}

.zoom-val { margin-left: 15px; }

/* strip of the taskbar at the very bottom */
.taskbar {
  height: 2px;
  flex: none;
  display: flex;
  background: #1c1c1c;
}

.tb-a { width: 196px; }
.tb-b { width: 48px; background: #555; }
.tb-c { width: 796px; }
.tb-d { width: 17px; background: #e6e6e6; }
.tb-e { flex: 1; }
```
